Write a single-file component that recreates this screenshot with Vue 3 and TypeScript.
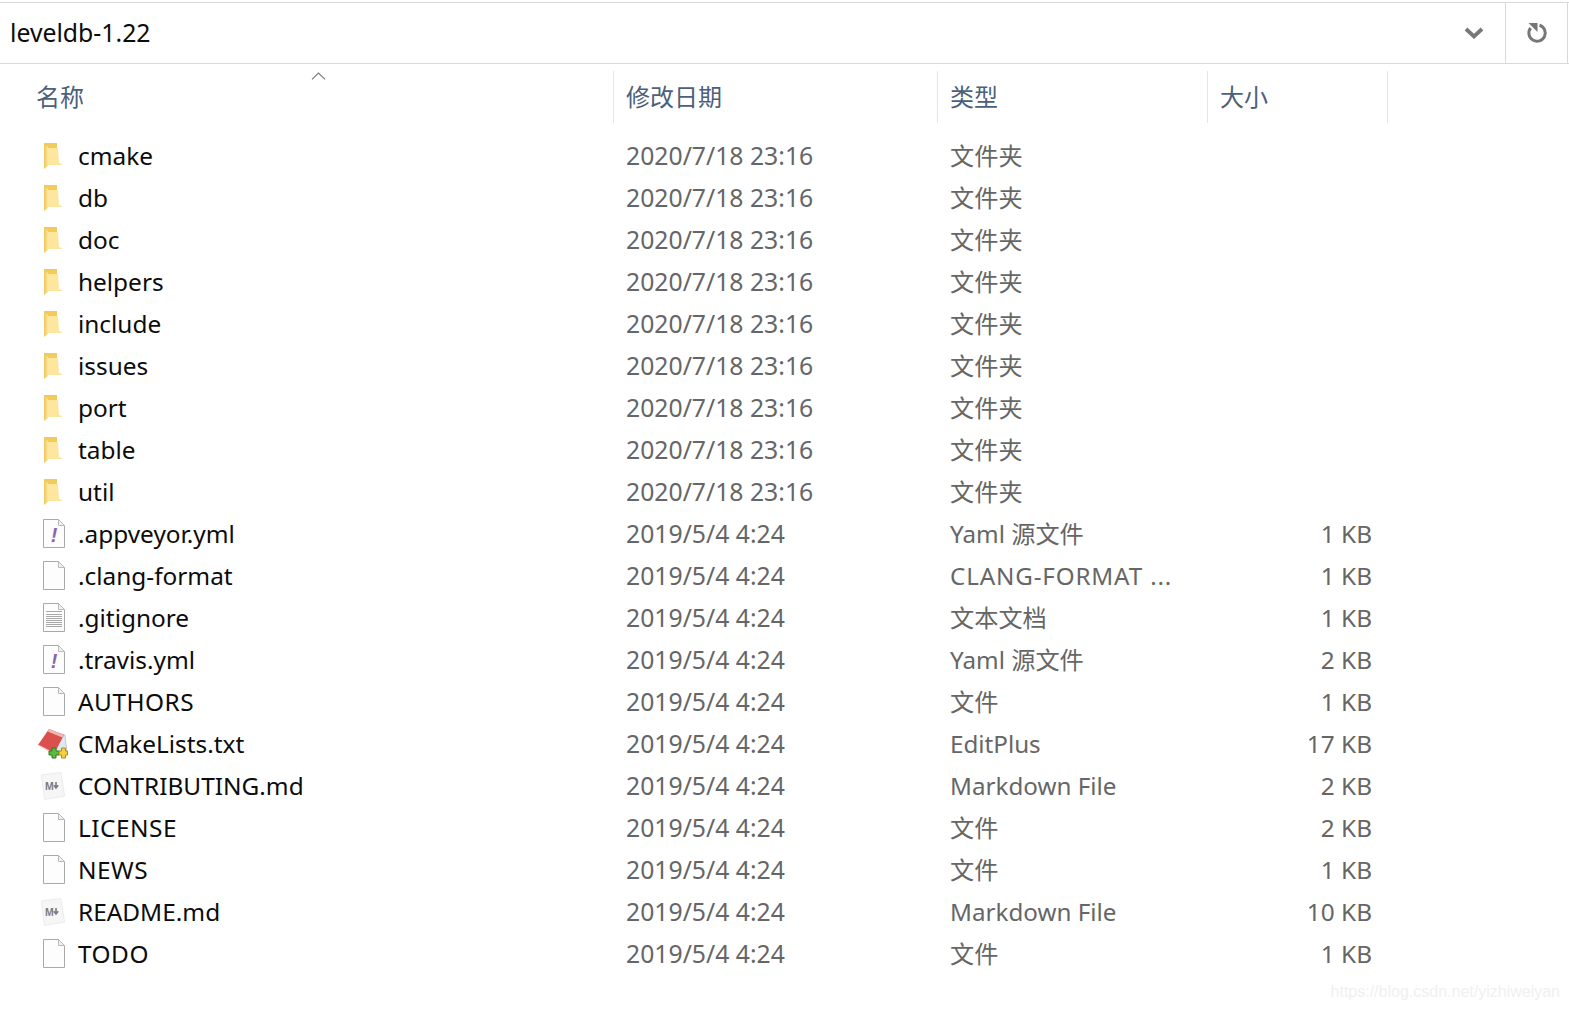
<script setup lang="ts">
type Kind = 'folder' | 'yaml' | 'blank' | 'text' | 'edit' | 'md'
interface Row { name: string; date: string; type: string; size: string; kind: Kind }
const F = '2020/7/18 23:16'
const D = '2019/5/4 4:24'
const folders = ['cmake', 'db', 'doc', 'helpers', 'include', 'issues', 'port', 'table', 'util']
const rows: Row[] = [
  ...folders.map((name): Row => ({ name, date: F, type: '文件夹', size: '', kind: 'folder' })),
  { name: '.appveyor.yml', date: D, type: 'Yaml 源文件', size: '1 KB', kind: 'yaml' },
  { name: '.clang-format', date: D, type: 'CLANG-FORMAT ...', size: '1 KB', kind: 'blank' },
  { name: '.gitignore', date: D, type: '文本文档', size: '1 KB', kind: 'text' },
  { name: '.travis.yml', date: D, type: 'Yaml 源文件', size: '2 KB', kind: 'yaml' },
  { name: 'AUTHORS', date: D, type: '文件', size: '1 KB', kind: 'blank' },
  { name: 'CMakeLists.txt', date: D, type: 'EditPlus', size: '17 KB', kind: 'edit' },
  { name: 'CONTRIBUTING.md', date: D, type: 'Markdown File', size: '2 KB', kind: 'md' },
  { name: 'LICENSE', date: D, type: '文件', size: '2 KB', kind: 'blank' },
  { name: 'NEWS', date: D, type: '文件', size: '1 KB', kind: 'blank' },
  { name: 'README.md', date: D, type: 'Markdown File', size: '10 KB', kind: 'md' },
  { name: 'TODO', date: D, type: '文件', size: '1 KB', kind: 'blank' },
]
const isCaps = (s: string): boolean => /^[A-Z]+$/.test(s)
const isLatinCaps = (s: string): boolean => s.startsWith('CLANG')
</script>

<template>
  <div class="page">
    <div class="addr">
      <div class="path">leveldb-1.22</div>
      <div class="chev">
        <svg width="20" height="14" viewBox="0 0 20 14"><path d="M2 3 L10 10.5 L18 3" fill="none" stroke="#777" stroke-width="3.8" /></svg>
      </div>
      <div class="refresh">
        <svg width="24" height="26" viewBox="0 0 24 26">
          <path d="M5.6 8 A8.2 8.2 0 1 0 14.5 5.2" fill="none" stroke="#777" stroke-width="3" />
          <path d="M3.5 3 H12.5 V12 Z" fill="#777" />
        </svg>
      </div>
    </div>

    <div class="head">
      <div class="hcell name">
        名称
        <svg class="sort" width="15" height="8" viewBox="0 0 15 8"><path d="M1 7.3 L7.5 1 L14 7.3" fill="none" stroke="#777" stroke-width="1.1" /></svg>
      </div>
      <div class="hcell sep">修改日期</div>
      <div class="hcell sep">类型</div>
      <div class="hcell sep">大小</div>
    </div>

    <div class="list">
      <div v-for="r in rows" :key="r.name" class="row">
        <div class="ncell">
          <span class="ic">
            <svg v-if="r.kind === 'folder'" width="20" height="28" viewBox="0 0 20 28">
              <defs>
                <linearGradient id="fg" x1="0" y1="0" x2="1" y2="0">
                  <stop offset="0" stop-color="#efc45a" /><stop offset="1" stop-color="#fbe6a0" />
                </linearGradient>
              </defs>
              <path d="M1 1 H14 V21 H1 Z" fill="#f4cb57" />
              <path d="M5 6 H15 L16 21 L19 22 V23 H5 Z" fill="#fde79e" />
              <path d="M1 2 L5 5 V24 L1 27 Z" fill="url(#fg)" />
            </svg>

            <svg v-else-if="r.kind === 'edit'" width="30" height="31" viewBox="0 0 30 31">
              <path d="M14 3 L27 7 L29 24 L17 26 Z" fill="#dde8f0" stroke="#b4bcc6" stroke-width=".7" />
              <path d="M11 1 L26 7 L16 26 L0 17 Z" fill="#d9504c" />
              <path d="M11 1 L26 7 L24.5 9.5 L9.5 3.5 Z" fill="#f4b5ad" />
              <path d="M1 17.5 L16 25.5" stroke="#f6d0cb" stroke-width="1.4" />
              <path d="M11 23 h3 v-3 h4 v3 h3 v4 h-3 v3 h-4 v-3 h-3 Z" fill="#5cbb41" stroke="#2d7c1c" />
              <path d="M21 23 h2.5 v-3 h4 v3 h2 v4 h-2 v3 h-4 v-3 h-2.5 Z" fill="#f5cf3f" stroke="#b58a12" />
            </svg>

            <svg v-else-if="r.kind === 'md'" width="26" height="30" viewBox="0 0 26 30">
              <path d="M1.5 4 L21 1.5 L24.5 25 L4.5 28.5 Z" fill="#f6f6f6" stroke="#ececec" />
              <text x="5" y="18.5" font-size="10.5" font-weight="700" font-family="Liberation Sans, sans-serif" fill="#7c7c7c">M</text>
              <path d="M16 11 V16 M13.8 14.2 L16 17 L18.2 14.2" fill="none" stroke="#7c7c7c" stroke-width="1.6" />
            </svg>

            <svg v-else class="doc" width="22" height="29" viewBox="0 0 22 29">
              <path d="M.5 .5 H15.5 L21.5 6.5 V28.5 H.5 Z" fill="#fdfdfd" stroke="#a9a9a9" />
              <path d="M15.5 .5 V6.5 H21.5 Z" fill="#f0f0f0" stroke="#bbb" />
              <g v-if="r.kind === 'text'" stroke="#a8a8a8">
                <path v-for="y in [8.5, 11.5, 13.5, 15.5, 17.5, 19.5, 21.5, 23.5]" :key="y" :d="`M3 ${y} H19`" />
              </g>
              <text v-if="r.kind === 'yaml'" x="11" y="23" text-anchor="middle" font-size="20" font-weight="700" font-style="italic" font-family="Liberation Sans, sans-serif" fill="#8a63b0">!</text>
            </svg>
          </span>
          <span class="fname" :class="{ caps: isCaps(r.name) }">{{ r.name }}</span>
        </div>
        <div class="cell date">{{ r.date }}</div>
        <div class="cell type" :class="{ wide: isLatinCaps(r.type) }">{{ r.type }}</div>
        <div class="cell size">{{ r.size }}</div>
      </div>
    </div>
    <div class="mark">https://blog.csdn.net/yizhiweiyan</div>
  </div>
</template>

<style scoped>
.page {
  position: relative;
  width: 1569px;
  height: 1010px;
  overflow: hidden;
  background: #fff;
  font-family: "Noto Sans", "Noto Sans CJK SC", sans-serif;
  font-size: 24.4px;
}
.addr {
  display: flex;
  height: 60px;
  margin-top: 2px;
  border-top: 1px solid #d9d9d9;
  border-bottom: 1px solid #d9d9d9;
}
.path {
  flex: 1;
  padding-left: 10px;
  line-height: 58px;
  font-size: 24.8px;
  color: #0c0c0c;
}
.chev {
  width: 62px;
  display: flex;
  align-items: center;
  justify-content: center;
}
.refresh {
  width: 61px;
  margin-right: 1px;
  border-left: 1px solid #d9d9d9;
  border-right: 1px solid #d9d9d9;
  display: flex;
  align-items: center;
  justify-content: center;
}
.head {
  display: grid;
  grid-template-columns: 613px 324px 270px 181px;
  height: 50px;
  margin-top: 7px;
  font-size: 24px;
  color: #4c607a;
}
.hcell {
  position: relative;
  padding-left: 12px;
  line-height: 52px;
}
.hcell.name {
  padding-left: 36px;
}
.sep {
  border-left: 1px solid #e5e5e5;
}
.head > .sep:last-child {
  border-right: 1px solid #e5e5e5;
}
.sort {
  position: absolute;
  left: 311px;
  top: 1px;
}
.list {
  margin-top: 13px;
}
.row {
  display: grid;
  grid-template-columns: 613px 324px 270px 165px;
  height: 42px;
  line-height: 42px;
  color: #666;
}
.ncell {
  display: flex;
  align-items: center;
  color: #0c0c0c;
}
.ic {
  width: 78px;
  flex: none;
  display: flex;
  justify-content: center;
  padding-left: 28px;
  box-sizing: border-box;
}
.doc {
  margin-left: 2px;
}
.caps {
  letter-spacing: 0.5px;
}
.cell {
  padding-left: 13px;
  padding-top: 1px;
  white-space: nowrap;
}
.date {
  font-size: 24.75px;
}
.type {
  font-size: 24.2px;
}
.wide {
  letter-spacing: 0.85px;
}
.size {
  text-align: right;
  padding-left: 0;
}
.mark {
  position: absolute;
  right: 9px;
  bottom: 9px;
  font-family: "Liberation Sans", sans-serif;
  font-size: 16px;
  color: #f0f0f0;
}
</style>
